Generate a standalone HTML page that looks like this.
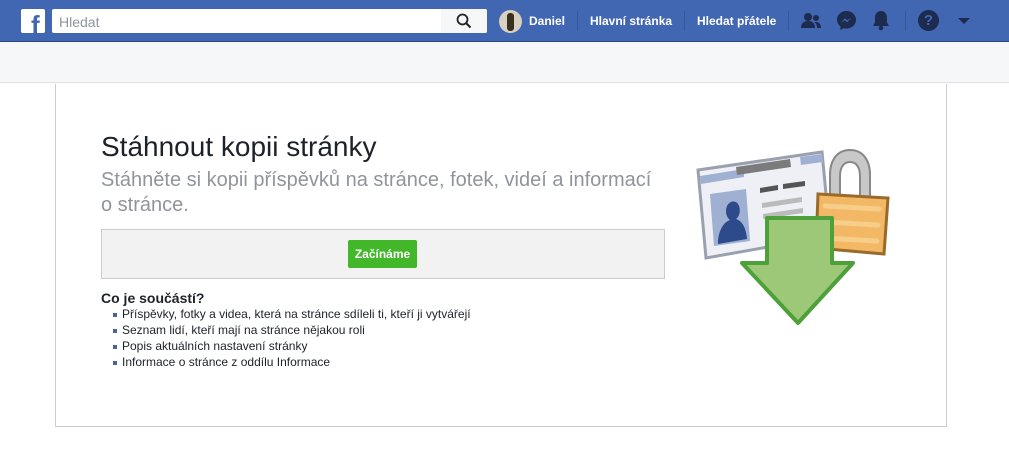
<!DOCTYPE html>
<html><head><meta charset="utf-8"><style>
*{margin:0;padding:0;box-sizing:border-box}
body{width:1009px;height:456px;background:#fff;font-family:"Liberation Sans",Arial,sans-serif;position:relative;overflow:hidden}
.hdr{position:absolute;left:0;top:0;width:1009px;height:42px;background:#4267b2;border-bottom:1px solid #29487d}
.a{position:absolute}
.nav{color:#fff;font-weight:bold;font-size:12px;top:14px}
.sep{position:absolute;top:11px;width:1px;height:20px;background:#365899}
.sub{position:absolute;left:0;top:42px;width:1009px;height:41px;background:#f6f7f9;border-bottom:1px solid #dddfe2}
.card{position:absolute;left:55px;top:84px;width:892px;height:343px;border:1px solid #ccc;border-top:none;background:#fff}
ul{list-style:none}
li{position:absolute;left:122px;font-size:12px;color:#1d2129}
li:before{content:"";position:absolute;left:-9px;top:6px;width:4px;height:4px;background:#4b6491}
</style></head><body>
<div class="hdr">
 <div class="a" style="left:21px;top:9px;width:24px;height:24px;background:#fff;border-radius:2px;overflow:hidden">
  <div class="a" style="left:10px;top:4px;font:bold 26px 'Liberation Sans';color:#4267b2;line-height:24px">f</div>
 </div>
 <div class="a" style="left:52px;top:9px;width:435px;height:24px;background:#fff;border-radius:2px"></div>
 <div class="a" style="left:441px;top:9px;width:46px;height:24px;background:#f6f7f9;border-radius:0 2px 2px 0"></div>
 <div class="a" style="left:59px;top:14px;font-size:14px;color:#90949c">Hledat</div>
 <svg class="a" style="left:456px;top:13px" width="16" height="16" viewBox="0 0 16 16"><circle cx="6.5" cy="6.5" r="5" fill="none" stroke="#1d2129" stroke-width="1.8"/><path d="M10 10l4.5 4.5" stroke="#1d2129" stroke-width="2"/></svg>
 <div class="a" style="left:499px;top:10px;width:23px;height:23px;border-radius:50%;background:#d8d0c0;overflow:hidden"><div class="a" style="left:8px;top:3px;width:7px;height:18px;background:#3a3020;border-radius:3px"></div></div>
 <div class="a nav" style="left:529px">Daniel</div>
 <div class="sep" style="left:577px"></div>
 <div class="a nav" style="left:590px">Hlavní stránka</div>
 <div class="sep" style="left:684px"></div>
 <div class="a nav" style="left:697px">Hledat přátele</div>
 <div class="sep" style="left:788px"></div>
 <svg class="a" style="left:800px;top:11px" width="22" height="20" viewBox="0 0 22 20"><circle cx="8" cy="6" r="4" fill="#1d2b4f"/><path d="M1 17c0-5 3-7 7-7s7 2 7 7z" fill="#1d2b4f"/><circle cx="16" cy="7" r="3" fill="#1d2b4f"/><path d="M16 11c3 0 5 2 5 6h-4c0-3-1-5-3-6z" fill="#1d2b4f"/></svg>
 <svg class="a" style="left:836px;top:10px" width="21" height="21" viewBox="0 0 21 21"><path d="M10.5 1C5 1 1 5 1 9.8c0 2.7 1.3 5 3.4 6.6V20l3.2-1.8c.9.3 1.9.4 2.9.4 5.5 0 9.5-4 9.5-8.8S16 1 10.5 1z" fill="#1d2b4f"/><path d="M5 12.5l4-4.3 2 2 4-2.2-4 4.3-2-2z" fill="#4267b2"/></svg>
 <svg class="a" style="left:872px;top:10px" width="18" height="21" viewBox="0 0 18 21"><path d="M9 1c-3.5 0-6 2.6-6 6.5v5L1 16h16l-2-3.5v-5C15 3.6 12.5 1 9 1z" fill="#1d2b4f"/><circle cx="9" cy="18" r="2.3" fill="#1d2b4f"/></svg>
 <div class="sep" style="left:905px"></div>
 <div class="a" style="left:918px;top:10px;width:21px;height:21px;border-radius:50%;background:#1d2b4f;color:#4267b2;font:bold 15px 'Liberation Sans';text-align:center;line-height:21px">?</div>
 <div class="a" style="left:958px;top:18px;width:0;height:0;border-left:6px solid transparent;border-right:6px solid transparent;border-top:6px solid #1d2b4f"></div>
</div>
<div class="sub"></div>
<div class="card"></div>
<div class="a" style="left:101px;top:131px;font-size:28px;color:#1d2129">Stáhnout kopii stránky</div>
<div class="a" style="left:101px;top:168px;width:560px;font-size:20px;line-height:25px;color:#90949c">Stáhněte si kopii příspěvků na stránce, fotek, videí a informací o stránce.</div>
<div class="a" style="left:101px;top:229px;width:564px;height:50px;background:#f2f2f2;border:1px solid #ccc"></div>
<div class="a" style="left:348px;top:240px;width:69px;height:28px;background:#42b72a;border-radius:2px;color:#fff;font:bold 12px 'Liberation Sans';text-align:center;line-height:28px">Začínáme</div>
<div class="a" style="left:101px;top:290px;font-size:14px;font-weight:bold;color:#1d2129">Co je součástí?</div>
<ul>
<li style="top:307px">Příspěvky, fotky a videa, která na stránce sdíleli ti, kteří ji vytvářejí</li>
<li style="top:323px">Seznam lidí, kteří mají na stránce nějakou roli</li>
<li style="top:339px">Popis aktuálních nastavení stránky</li>
<li style="top:355px">Informace o stránce z oddílu Informace</li>
</ul>
<svg class="a" style="left:680px;top:130px" width="220" height="210" viewBox="0 0 220 210">
 <path d="M18 40L142 22l8 84-124 22z" fill="#eef0f5" stroke="#9aa0ad" stroke-width="3"/>
 <path d="M20 46l44-7 0 8-43 7z" fill="#9fb0d3"/>
 <path d="M56 37l54-8 1 8-54 8z" fill="#7b7b7b"/>
 <path d="M120 27l22-3 1 8-22 3z" fill="#9fb0d3"/>
 <path d="M30 64l36-5 4 52-36 5z" fill="#9fb0d3"/>
 <path d="M38 114c0-14 6-22 12-24-4-3-5-9-3-14 3-6 10-6 12 0 2 5 0 11-3 13 6 2 10 8 11 20z" fill="#2d4a8a"/>
 <path d="M80 58l18-3v5l-18 3zM103 54l22-3v5l-22 3z" fill="#555"/>
 <path d="M82 73l40-6v5l-40 6zM83 84l40-6v5l-40 6z" fill="#bbb"/>
 <path d="M150 68V45c0-16 8-25 20-25s20 9 20 25v23h-10V46c0-9-4-14-10-14s-10 5-10 14v22z" fill="#c8c8c8" stroke="#888" stroke-width="2"/>
 <path d="M138 64l70 4-4 56-68-6z" fill="#f2b866" stroke="#9a6a2a" stroke-width="3"/>
 <path d="M145 76l54 3M144 92l54 3M143 108l54 3" stroke="#f7cd8a" stroke-width="5" stroke-linecap="round"/>
 <path d="M87 88h65v45h21l-55 60-56-60h25z" fill="#9dc878" stroke="#4ea03a" stroke-width="4" stroke-linejoin="round"/>
</svg>
</body></html>
